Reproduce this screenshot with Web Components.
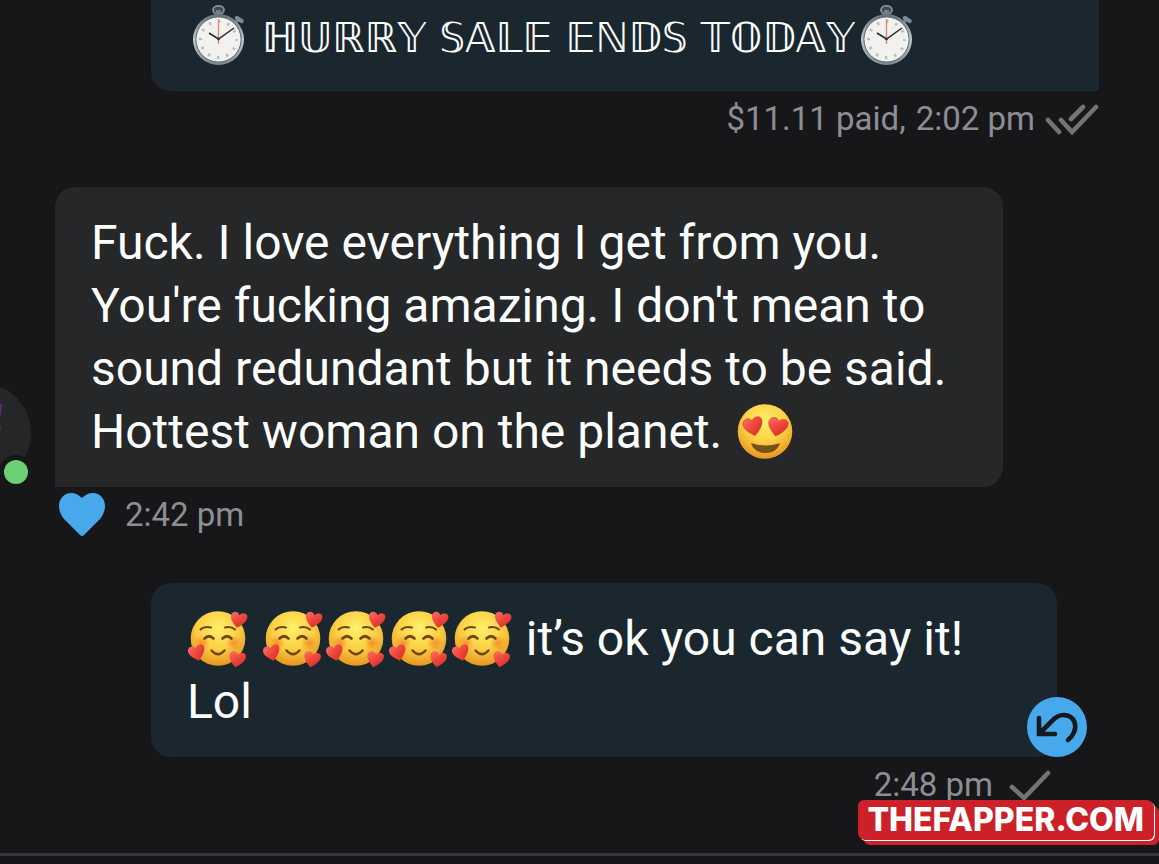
<!DOCTYPE html>
<html lang="en">
<head>
<meta charset="utf-8">
<meta name="viewport" content="width=device-width, initial-scale=1">
<title>Messages</title>
<style>
  body {
    margin: 0;
    background: #17171a;
    color: #fcfdfd;
    font-family: Roboto, "Liberation Sans", sans-serif;
    --metaColor: #8b8e93;
    --accentColor: #47a9ec;
  }
</style>
</head>
<body>
  <chat-thread>
    <chat-message side="out" tail="right">
      <emoji-icon name="watch"></emoji-icon> <fancy-text><b>ℍ</b>𝕌ℝℝ𝕐 𝕊𝔸𝕃𝔼 𝔼ℕ𝔻𝕊 𝕋𝕆𝔻𝔸𝕐</fancy-text><emoji-icon name="watch"></emoji-icon>
      <message-meta slot="meta" status="read"><span slot="price">$11.11 paid,</span>2:02 pm</message-meta>
    </chat-message>

    <chat-message side="in" tail="left">
      <user-avatar slot="avatar"></user-avatar>
      Fuck. I love everything I get from you. You're fucking amazing. I don't mean to sound redundant but it needs to be said. Hottest woman on the planet. <emoji-icon name="love"></emoji-icon>
      <message-meta slot="meta" liked>2:42 pm</message-meta>
    </chat-message>

    <chat-message side="out" inset>
      <emoji-icon name="adore"></emoji-icon> <emoji-icon name="adore"></emoji-icon><emoji-icon name="adore"></emoji-icon><emoji-icon name="adore"></emoji-icon><emoji-icon name="adore"></emoji-icon> it’s ok you can say it! Lol
      <reply-button slot="action"></reply-button>
      <message-meta slot="meta" status="sent">2:48 pm</message-meta>
    </chat-message>
  </chat-thread>
  <site-stamp>THEFAPPER.COM</site-stamp>

<script>
'use strict';
(
  function () {

    // every component clones its markup into an open shadow root
    class BaseElement extends HTMLElement {
      constructor() {
        super();
        const shadow = this.attachShadow({ mode: 'open' });
        const template = document.createElement('template');
        template.innerHTML = this.render();
        shadow.appendChild(template.content.cloneNode(true));
      }
    }

    class ChatThread extends BaseElement {
      render() {
        return `
        <style>
          :host {
            display: block;
            overflow: hidden;
          }

          /* the thread is scrolled, the first bubble runs off the top */
          main {
            display: flex;
            flex-direction: column;
            gap: 40px;
            margin-top: -20px;
            padding-bottom: 40px;
          }

          footer {
            border-top: 3px solid #36373a;
            height: 8px;
          }
        </style>
        <main><slot></slot></main>
        <footer></footer>
      `;
      }
    }

    class ChatMessage extends BaseElement {
      render() {
        return `
        <style>
          :host {
            display: block;
            padding: 0 60px 0 151px;
          }

          :host([inset]) {
            padding-right: 102px;
          }

          :host([side="in"]) {
            padding: 0 156px 0 55px;
          }

          .row {
            display: flex;
            align-items: flex-end;
            position: relative;
          }

          .bubble {
            flex: 1;
            padding: 24px 36px;
            border-radius: 20px;
            background: #1a272e;
            font-size: 48px;
            line-height: 63px;
          }

          :host([side="in"]) .bubble {
            background: #252729;
          }

          :host([tail="right"]) .bubble {
            border-bottom-right-radius: 0;
          }

          :host([tail="left"]) .bubble {
            border-bottom-left-radius: 0;
          }

          /* floats over the corner of the bubble */
          .action {
            position: absolute;
            right: -30px;
            bottom: 0;
          }
        </style>
        <div class="row">
          <slot name="avatar"></slot>
          <div class="bubble"><slot></slot></div>
          <div class="action"><slot name="action"></slot></div>
        </div>
        <slot name="meta"></slot>
      `;
      }
    }

    class MessageMeta extends BaseElement {
      render() {
        return `
        <style>
          :host {
            display: flex;
            align-items: center;
            gap: 10px;
            height: 56px;
            color: var(--metaColor);
            font-size: 33px;
            line-height: 40px;
          }

          :host([status]) {
            justify-content: flex-end;
          }

          :host([status="sent"]) {
            gap: 16px;
            padding-right: 6px;
          }

          :host([liked]) {
            gap: 20px;
            padding-left: 4px;
          }

          svg {
            display: block;
            fill: none;
            stroke: #727477;
            stroke-width: 4.6;
            stroke-linecap: round;
          }

          button {
            border: 0;
            padding: 0;
            background: none;
          }

          button path {
            fill: var(--accentColor);
            stroke: none;
          }
        </style>
        ${this.hasAttribute('liked') ? `
        <button type="button" aria-label="Unlike">
          <svg width="46" height="44" viewBox="0 0 46 44"><path d="M23 5C27 1 31 0 34 0C41 0 46 6 46 13C46 18 44 22 41 26L25 42Q23 44 21 42L5 26C2 22 0 18 0 13C0 6 5 0 12 0C15 0 19 1 23 5Z"/></svg>
        </button>` : ''}
        <slot name="price"></slot>
        <span><slot></slot></span>
        ${this.getAttribute('status') === 'read' ? `
        <svg width="54" height="32" viewBox="0 0 54 32"><path d="M3 17L14 29M16 17L27 29L51 4M26 16L38 4"/></svg>` : ''}
        ${this.getAttribute('status') === 'sent' ? `
        <svg width="42" height="32" viewBox="0 0 42 32"><path d="M3 18L15 29L39 4"/></svg>` : ''}
      `;
      }
    }

    class UserAvatar extends BaseElement {
      render() {
        return `
        <style>
          :host {
            display: block;
            flex: none;
            width: 100px;
            margin: 0 24px 2px -124px;
          }

          svg {
            display: block;
          }
        </style>
        <svg width="100" height="102" viewBox="0 0 100 102">
          <circle cx="50" cy="50" r="50" fill="#242628"/>
          <path d="M66 23L71 20L70 32L66 34Z" fill="#6b1f7c"/>
          <path d="M66 44L70 42L70 48L66 50Z" fill="#6b1838"/>
          <circle cx="85" cy="89" r="17" fill="#17171a"/>
          <circle cx="85" cy="89" r="12" fill="#6bd073"/>
        </svg>
      `;
      }
    }

    class ReplyButton extends BaseElement {
      render() {
        return `
        <style>
          :host {
            display: block;
          }

          button {
            display: block;
            border: 0;
            padding: 0;
            width: 60px;
            height: 60px;
            border-radius: 50%;
            background: var(--accentColor);
          }

          svg {
            display: block;
          }
        </style>
        <button type="button" aria-label="Undo">
          <svg width="60" height="60" viewBox="0 0 60 60" fill="none" stroke="#15191d" stroke-width="4.6" stroke-linecap="round"><path d="M12 21V37H28M13 36L25 24C33 15 44 17 47.5 25C50 32 46 39 41 43"/></svg>
        </button>
      `;
      }
    }

    class FancyText extends BaseElement {
      render() {
        return `
        <style>
          :host {
            font-family: "DejaVu Sans", sans-serif;
            font-size: 41px;
            line-height: 1;
            white-space: nowrap;
          }
        </style>
        <slot></slot>`;
      }
    }

    const heart = 'M9 17C4 13 0 9 0 5C0 2 2 0 5 0C7 0 8 1 9 3C10 1 12 0 14 0C17 0 19 2 18 6C17 10 13 14 9 17Z';

    const face = `
      <defs>
        <radialGradient id="skin" cx="50%" cy="32%" r="68%">
          <stop offset="0" stop-color="#fff06a"/>
          <stop offset=".55" stop-color="#fbd044"/>
          <stop offset="1" stop-color="#e6951f"/>
        </radialGradient>
        <linearGradient id="red" x1="0" y1="0" x2="1" y2="1">
          <stop offset="0" stop-color="#fb7068"/>
          <stop offset=".5" stop-color="#ee4439"/>
          <stop offset="1" stop-color="#cb2a2c"/>
        </linearGradient>
        <radialGradient id="blush">
          <stop offset="0" stop-color="#f28328" stop-opacity=".8"/>
          <stop offset="1" stop-color="#f28328" stop-opacity="0"/>
        </radialGradient>
      </defs>
      <circle cx="31" cy="31.5" r="27.3" fill="url(#skin)"/>`;

    const emojis = {
      adore: `${face}
        <circle cx="15" cy="36" r="8" fill="url(#blush)"/>
        <circle cx="47" cy="36" r="8" fill="url(#blush)"/>
        <g fill="none" stroke="#70451a" stroke-width="2" stroke-linecap="round">
          <path d="M13.5 22.5Q17 19 24 20.5M38 20.5Q44 19 48 22.5"/>
          <path d="M17.5 31.5Q22 27 26.5 31.5M35.5 31.5Q40 27 44.5 31.5" stroke-width="2.6"/>
          <path d="M24.5 43.5Q31 51 37.5 43.5" stroke-width="2.4"/>
        </g>
        <g fill="url(#red)">
          <path d="${heart}" transform="translate(45 4) rotate(12) scale(.9)"/>
          <path d="${heart}" transform="translate(0 40.5) rotate(-14) scale(.92)"/>
          <path d="${heart}" transform="translate(43.5 43.5) rotate(12) scale(.9)"/>
        </g>`,
      love: `${face}
        <g fill="url(#red)" stroke="#c9352c" stroke-width=".5">
          <path d="${heart}" transform="translate(8 20) rotate(-12) scale(1.06)"/>
          <path d="${heart}" transform="translate(36 16.5) rotate(12) scale(1.06)"/>
        </g>
        <path d="M17 43Q31.5 48 46 43C44 50 38 53 31.5 53C25 53 19 50 17 43Z" fill="#785018"/>`,
      watch: `
        <defs>
          <linearGradient id="steel" x1="0" y1="0" x2="0" y2="1">
            <stop offset="0" stop-color="#677078"/>
            <stop offset=".5" stop-color="#c4cbcf"/>
            <stop offset="1" stop-color="#7c8890"/>
          </linearGradient>
        </defs>
        <ellipse cx="31.5" cy="6" rx="5.5" ry="4.2" fill="#3d4a52" stroke="#82929c" stroke-width="1.8"/>
        <path d="M29 6H34V12H29Z" fill="#73818a"/>
        <path d="M47 20L52 15" stroke="#72818c" stroke-width="3"/>
        <path d="M50 14L54.5 17" stroke="#7c8a93" stroke-width="4.5" stroke-linecap="round"/>
        <circle cx="31.5" cy="35.5" r="25.5" fill="url(#steel)"/>
        <circle cx="31.5" cy="35.5" r="22.6" fill="#f1f1ef" stroke="#59636b"/>
        <circle cx="31.5" cy="35.5" r="18" fill="none" stroke="#bdbcb6" stroke-width="3" stroke-dasharray="2.4 7.02" stroke-dashoffset="1"/>
        <path d="M22 29L31.5 35L47 24" fill="none" stroke="#252b2e" stroke-width="1.5"/>
        <path d="M31.5 15V40" stroke="#e88873" stroke-width="1.4"/>
        <circle cx="31.5" cy="35" r="1.4" fill="#333"/>`
    };

    class EmojiIcon extends BaseElement {
      render() {
        return `
        <style>
          :host {
            display: inline-block;
            width: 63px;
            height: 63px;
            vertical-align: top;
          }

          svg {
            display: block;
          }
        </style>
        <svg width="63" height="63" viewBox="0 0 63 63" aria-hidden="true">${emojis[this.getAttribute('name')]}</svg>
      `;
      }
    }

    class SiteStamp extends BaseElement {
      render() {
        return `
        <style>
          /* stamped over the lower right corner */
          :host {
            position: absolute;
            top: 800px;
            right: 6px;
            padding: 0 9px;
            border-radius: 6px;
            background: #cc2128;
            box-shadow: 1px 1px #cc2128, 2px 2px #fff, 6px 6px #cc2128;
            color: #fff;
            font-family: Inter, sans-serif;
            font-size: 32px;
            font-weight: 800;
            line-height: 39px;
          }
        </style>
        <slot></slot>
      `;
      }
    }

    // let the browser know about the custom elements
    customElements.define('chat-thread', ChatThread);
    customElements.define('chat-message', ChatMessage);
    customElements.define('message-meta', MessageMeta);
    customElements.define('user-avatar', UserAvatar);
    customElements.define('reply-button', ReplyButton);
    customElements.define('fancy-text', FancyText);
    customElements.define('emoji-icon', EmojiIcon);
    customElements.define('site-stamp', SiteStamp);
  })();
</script>
</body>
</html>
